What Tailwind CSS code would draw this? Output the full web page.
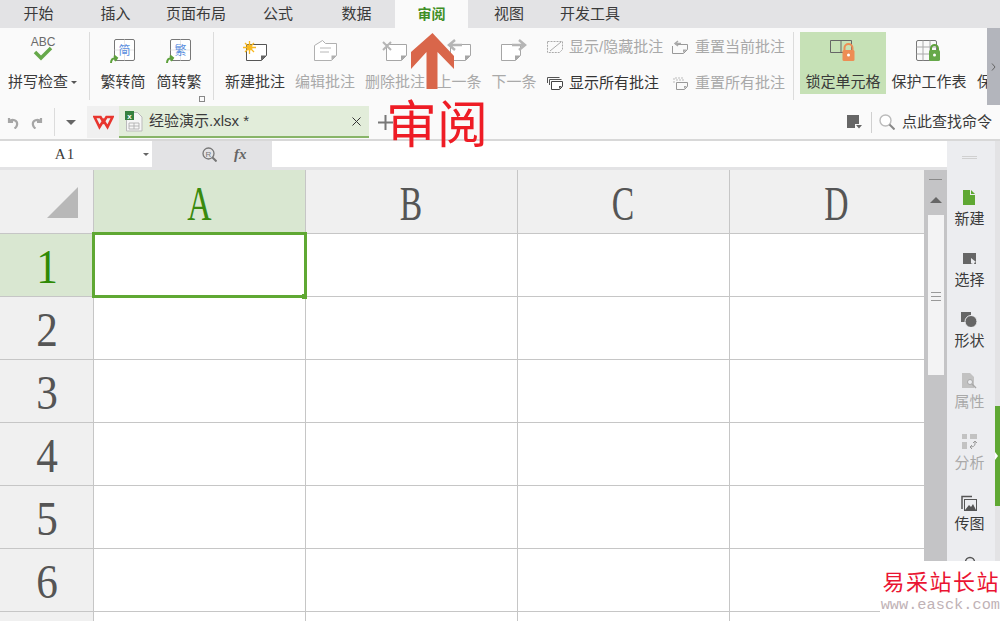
<!DOCTYPE html>
<html lang="zh">
<head>
<meta charset="utf-8">
<script src="https://cdn.jsdelivr.net/npm/@tailwindcss/browser@4"></script>
</head>
<body class="font-['Liberation_Sans','Noto_Sans_CJK_SC',sans-serif] text-[15px] text-[#3a3a3a] bg-white">
<div class="relative w-[1000px] h-[621px] overflow-hidden">

  <!-- tabs -->
  <div class="flex h-[28px] bg-[#e3e3e5] leading-[28px] text-center">
    <div class="w-[77px]">开始</div>
    <div class="w-[77px]">插入</div>
    <div class="w-[84px]">页面布局</div>
    <div class="w-[80px]">公式</div>
    <div class="w-[77px]">数据</div>
    <div class="w-[73px] bg-[#fafafa] text-[#3f8f25] font-bold text-[14px]">审阅</div>
    <div class="w-[82px]">视图</div>
    <div class="w-[80px]">开发工具</div>
  </div>

  <!-- ribbon -->
  <div class="flex h-[77px] bg-[#fafafa] overflow-hidden relative">
    <div class="w-[85px] flex flex-col items-center pt-[8px]">
      <svg class="w-[30px] h-[28px]" viewBox="0 4 30 28"><text x="15" y="14" text-anchor="middle" font-size="12" fill="#6a6a6a" font-family="Liberation Sans">ABC</text><path d="M7 20l6 6 10-10" fill="none" stroke="#66a84a" stroke-width="3.5"/></svg>
      <div class="h-[20px] mt-[8px] leading-[20px] flex items-center whitespace-nowrap">拼写检查<span class="ml-[3px] w-0 h-0 border-x-[3px] border-x-transparent border-t-[3px] border-t-[#555]"></span></div>
    </div>
    <div class="w-[1px] h-[68px] mt-[4px] ml-[4px] bg-[#dcdcdc]"></div>

    <div class="w-[56px] ml-[5px] flex flex-col items-center pt-[8px]">
      <svg class="w-[26px] h-[28px]" viewBox="0 0 26 28"><rect x="4.5" y="3.500" width="20" height="21" rx="1.500" fill="#fff" stroke="#777"/><path d="M4.500 14h20M14.500 3.500v21" stroke="#ccc" stroke-dasharray="1 1"/><text x="14.500" y="19" text-anchor="middle" font-size="12" fill="#5b8fe0" font-family="Noto Sans CJK SC">简</text><path d="M1 27c0-3 2-5 5-5M4 19.500l3 2.500-2 3" fill="none" stroke="#5ea13c" stroke-width="2"/></svg>
      <div class="h-[20px] mt-[8px] leading-[20px] whitespace-nowrap">繁转简</div>
    </div>
    <div class="w-[56px] flex flex-col items-center pt-[8px]">
      <svg class="w-[26px] h-[28px]" viewBox="0 0 26 28"><rect x="4.5" y="3.500" width="20" height="21" rx="1.500" fill="#fff" stroke="#777"/><path d="M4.500 14h20M14.500 3.500v21" stroke="#ccc" stroke-dasharray="1 1"/><text x="14.500" y="19" text-anchor="middle" font-size="12" fill="#5b8fe0" font-family="Noto Sans CJK SC">繁</text><path d="M1 27c0-3 2-5 5-5M4 19.500l3 2.500-2 3" fill="none" stroke="#5ea13c" stroke-width="2"/></svg>
      <div class="h-[20px] mt-[8px] leading-[20px] whitespace-nowrap">简转繁</div>
    </div>
    <div class="w-[1px] h-[68px] mt-[4px] ml-[6px] bg-[#dcdcdc]"></div>
    <div class="absolute left-[199px] top-[68px] w-[6px] h-[6px] border border-[#888]"></div>

    <div class="w-[70px] ml-[6px] flex flex-col items-center pt-[8px]">
      <svg class="w-[26px] h-[28px]" viewBox="0 0 26 28"><path d="M4.500 8.500h20v11l-5 5h-15z" fill="#fff" stroke="#555"/><path d="M19 24.500v-5h5.500z" fill="#666"/><g transform="translate(1 5)"><circle cx="6.500" cy="6.500" r="3" fill="#f8c23a"/><path d="M6.500 0v13M0 6.500h13M2 2l9 9M11 2l-9 9" stroke="#f8b81f" stroke-width="1.300"/></g></svg>
      <div class="h-[20px] mt-[8px] leading-[20px] whitespace-nowrap">新建批注</div>
    </div>
    <div class="w-[70px] flex flex-col items-center pt-[8px] text-[#a9a9a9]">
      <svg class="w-[26px] h-[28px]" viewBox="0 0 26 28"><path d="M2.500 9.500l8-5 3 3h11v12l-5 5h-17z" fill="#fff" stroke="#b0b0b0"/><path d="M19.500 24v-4.500h5z" fill="#b0b0b0"/><path d="M8 12h11M8 16h9" stroke="#b8b8b8"/></svg>
      <div class="h-[20px] mt-[8px] leading-[20px] whitespace-nowrap">编辑批注</div>
    </div>
    <div class="w-[70px] flex flex-col items-center pt-[8px] text-[#a9a9a9]">
      <svg class="w-[26px] h-[28px]" viewBox="0 0 26 28"><path d="M4.500 8.500h20v11l-5 5h-15z" fill="#fff" stroke="#a6a6a6"/><path d="M19 24.500v-5h5.500z" fill="#a6a6a6"/><path d="M1 6l8 8M9 6l-8 8" stroke="#b5b5b5" stroke-width="2"/></svg>
      <div class="h-[20px] mt-[8px] leading-[20px] whitespace-nowrap">删除批注</div>
    </div>
    <div class="w-[58px] flex flex-col items-center pt-[8px] text-[#a9a9a9]">
      <svg class="w-[26px] h-[28px]" viewBox="0 0 26 28"><path d="M4.500 8.500h20v11l-5 5h-15z" fill="#fff" stroke="#a6a6a6"/><path d="M19 24.500v-5h5.500z" fill="#a6a6a6"/><path d="M16 9H5M9 4L3 9l6 5" fill="none" stroke="#b5b5b5" stroke-width="2.500"/></svg>
      <div class="h-[20px] mt-[8px] leading-[20px] whitespace-nowrap">上一条</div>
    </div>
    <div class="w-[52px] flex flex-col items-center pt-[8px] text-[#a9a9a9]">
      <svg class="w-[26px] h-[28px]" viewBox="0 0 26 28"><path d="M.5 8.500h19v11l-5 5H.5z" fill="#fff" stroke="#a6a6a6"/><path d="M14 24.500v-5h5.500z" fill="#a6a6a6"/><path d="M11 9h11M18 4l6 5-6 5" fill="none" stroke="#b5b5b5" stroke-width="2.500"/></svg>
      <div class="h-[20px] mt-[8px] leading-[20px] whitespace-nowrap">下一条</div>
    </div>

    <div class="w-[125px] ml-[7px] flex flex-col pt-[9px] gap-[16px]">
      <div class="flex items-center h-[20px] text-[#a9a9a9] gap-[6px] whitespace-nowrap">
        <svg class="w-[16px] h-[14px] shrink-0" viewBox="0 0 16 14"><path d="M.5 1.500h15v8l-3 3H.5z" fill="none" stroke="#aaa" stroke-dasharray="2 1"/><path d="M3 11L14 2" stroke="#aaa"/></svg>显示/隐藏批注
      </div>
      <div class="flex items-center h-[20px] gap-[6px] text-[#333] whitespace-nowrap">
        <svg class="w-[16px] h-[14px] shrink-0" viewBox="0 0 16 14"><path d="M.5 7V1.500h12M2.500 9V3.500h12" fill="none" stroke="#555"/><path d="M4.500 5.500h11v5l-3 3h-8z" fill="#fff" stroke="#444"/><path d="M12 13v-3h3z" fill="#555"/></svg>显示所有批注
      </div>
    </div>
    <div class="w-[121px] flex flex-col pt-[9px] gap-[16px] text-[#a9a9a9]">
      <div class="flex items-center h-[20px] gap-[7px] whitespace-nowrap">
        <svg class="w-[16px] h-[14px] shrink-0" viewBox="0 0 16 14"><path d="M3.500 4.500h12v5l-4 4h-11V6" fill="none" stroke="#999"/><path d="M11 13V9.500h4z" fill="#aaa"/><path d="M9 3.500H4M6 1L3 3.500 6 6" fill="none" stroke="#aaa" stroke-width="1.500"/></svg>重置当前批注
      </div>
      <div class="flex items-center h-[20px] gap-[7px] whitespace-nowrap">
        <svg class="w-[16px] h-[14px] shrink-0" viewBox="0 0 16 14"><path d="M4.500 6.500h11v4l-3 3h-8z" fill="none" stroke="#999"/><path d="M2 7V2h9M4 4h9" fill="none" stroke="#bbb" stroke-dasharray="2 1"/><path d="M12 13v-3h3z" fill="#aaa"/></svg>重置所有批注
      </div>
    </div>

    <div class="w-[1px] h-[68px] mt-[4px] bg-[#dcdcdc]"></div>
    <div class="w-[86px] h-[62px] mt-[4px] ml-[6px] bg-[#c6e1b6] flex flex-col items-center pt-[4px] shrink-0">
      <svg class="w-[26px] h-[28px]" viewBox="0 0 26 28"><path d="M.5 4.500h21v12H.5zM11 4.500v12" fill="none" stroke="#666"/><path d="M14.500 15v-3a4 4 0 018 0v3" fill="none" stroke="#ee8d54" stroke-width="2"/><rect x="12.500" y="14" width="12" height="11" rx="1.500" fill="#ee8d54"/><circle cx="18.500" cy="19" r="1.500" fill="#fff"/></svg>
      <div class="h-[20px] mt-[8px] leading-[20px] whitespace-nowrap">锁定单元格</div>
    </div>
    <div class="w-[86px] flex flex-col items-center pt-[8px] shrink-0">
      <svg class="w-[26px] h-[28px]" viewBox="0 0 26 28"><rect x=".5" y="4.500" width="20" height="20" rx="1.500" fill="none" stroke="#777"/><path d="M.5 11h20M.5 18h20M7 4.500v20M14 4.500v20" stroke="#aaa"/><path d="M15 15v-2.500a3.500 3.500 0 017 0V15" fill="none" stroke="#5ea13c" stroke-width="2"/><rect x="13" y="14" width="11" height="11" rx="1.500" fill="#66a84a"/><circle cx="18.500" cy="19" r="1.500" fill="#fff"/></svg>
      <div class="h-[20px] mt-[8px] leading-[20px] whitespace-nowrap">保护工作表</div>
    </div>
    <div class="w-[15px] flex flex-col pl-[5px] pt-[44px] overflow-hidden shrink-0 h-[77px]"><span class="leading-[20px]">保</span></div>
    <div class="absolute right-0 top-0 w-[13px] h-[77px] bg-[#b3b5bc] flex items-center justify-center">
      <svg class="w-[6px] h-[8px]" viewBox="0 0 6 8"><path d="M1 .5l3 3.500-3 3.500" fill="none" stroke="#666"/></svg>
    </div>
  </div>

  <!-- document bar -->
  <div class="flex items-center h-[34px] bg-[#fafafa] relative">
    <div class="w-[54px] h-[32px] flex items-center gap-[12px] pl-[6px] shrink-0">
      <svg class="w-[13px] h-[13px]" viewBox="0 0 13 13"><path d="M3 2v4h4M3.500 5.500C6 2.500 12 4 11 9c-.3 1.500-1.500 3-2.500 3.500" fill="none" stroke="#a6a6a6" stroke-width="2.200"/></svg>
      <svg class="w-[13px] h-[13px]" viewBox="0 0 13 13"><path d="M10 2v4H6M9.500 5.500C7 2.500 1 4 2 9c.3 1.500 1.500 3 2.500 3.500" fill="none" stroke="#a6a6a6" stroke-width="2.200"/></svg>
    </div>
    <div class="w-[1px] h-[28px] bg-[#dcdcdc] shrink-0"></div>
    <div class="w-[32px] flex justify-center shrink-0"><span class="w-0 h-0 border-x-[5px] border-x-transparent border-t-[5px] border-t-[#666]"></span></div>
    <div class="w-[32px] h-[32px] bg-[#f0f0f0] flex items-center justify-center shrink-0">
      <svg class="w-[21px] h-[15px]" viewBox="0 0 21 15"><path d="M1.500 2l5 10 4-6.500 4 6.500 5-10h-6l-3 5-3-5z" fill="none" stroke="#e8352e" stroke-width="2.600"/></svg>
    </div>
    <div class="w-[250px] h-[32px] bg-[#e2edda] border-b-2 border-[#88b568] flex items-center shrink-0">
      <svg class="w-[18px] h-[21px] ml-[6px] shrink-0" viewBox="0 0 18 21"><path d="M1.500 1.500h11l4.500 4.500v14H1.500z" fill="#f6f6f6" stroke="#bbb"/><rect x="0" y="0" width="9" height="9" fill="#35803f"/><text x="4.500" y="7.500" text-anchor="middle" font-size="8" fill="#fff" font-family="Liberation Sans" font-weight="bold">x</text><path d="M4 12h10v6H4zM4 15h10M9 12v6" fill="none" stroke="#aaa" stroke-width=".8"/></svg>
      <span class="ml-[6px] leading-[20px]">经验演示.xlsx *</span>
      <svg class="w-[9px] h-[9px] ml-auto mr-[8px]" viewBox="0 0 9 9"><path d="M.5.500l8 8M8.500.500l-8 8" stroke="#333"/></svg>
    </div>
    <svg class="w-[15px] h-[15px] ml-[9px]" viewBox="0 0 15 15"><path d="M0 7.500h15M7.500 0v15" stroke="#777" stroke-width="2"/></svg>
    <div class="ml-auto flex items-center">
      <svg class="w-[15px] h-[14px]" viewBox="0 0 15 14"><path d="M0 0h12v9H8v4H0z" fill="#666"/><path d="M9 10h6l-3 3.500z" fill="#666"/></svg>
      <div class="w-[1px] h-[21px] bg-[#d0d0d0] ml-[9px]"></div>
      <svg class="w-[16px] h-[16px] ml-[7px]" viewBox="0 0 16 16"><circle cx="6.500" cy="6.500" r="5.500" fill="#fff" stroke="#bbb" stroke-width="1.400"/><path d="M10.500 10.500L15.500 15.500" stroke="#888" stroke-width="2"/></svg>
      <span class="ml-[7px] mr-[8px] leading-[20px]">点此查找命令</span>
    </div>
  </div>

  <!-- work area -->
  <div class="flex h-[482px] border-t-2 border-[#d8d8d8] bg-[#e3e3e5]">
    <div class="w-[947px] flex flex-col shrink-0">
      <!-- formula bar -->
      <div class="flex h-[29px] pb-[3px] bg-[#e3e3e5] shrink-0">
        <div class="w-[152px] bg-white relative flex items-center justify-center pr-[22px] pt-[1px] font-['Liberation_Serif',serif] text-[15px] tracking-[1px]">A1
          <span class="absolute right-[3px] top-[12px] w-0 h-0 border-x-[3px] border-x-transparent border-t-[3px] border-t-[#666]"></span>
        </div>
        <div class="w-[120px] flex items-center pl-[50px] gap-[17px]">
          <svg class="w-[15px] h-[15px]" viewBox="0 0 15 15"><circle cx="6.500" cy="6.500" r="5.500" fill="none" stroke="#777" stroke-width="1.300"/><path d="M10.500 10.500L14.500 14.500" stroke="#777" stroke-width="2"/><text x="6.500" y="9.500" text-anchor="middle" font-size="8" fill="#777" font-family="Liberation Sans">R</text></svg>
          <span class="font-['Liberation_Serif',serif] italic text-[15px] font-bold text-[#666]">fx</span>
        </div>
        <div class="flex-1 bg-white"></div>
      </div>
      <!-- sheet + scrollbar -->
      <div class="flex flex-1 min-h-0">
        <div class="w-[924px] shrink-0 overflow-hidden bg-white grid grid-cols-[94px_212px_212px_212px_212px] grid-rows-[64px_63px_63px_63px_63px_63px_63px_63px] font-['Liberation_Serif',serif] text-[48px] leading-none relative">
          <div class="bg-[#f0f0f0] border-r border-b border-[#c6c6c6] relative"><svg class="absolute left-[47px] top-[17px] w-[31px] h-[31px]" viewBox="0 0 31 31"><path d="M31 0v31H0z" fill="#b8b8b8"/></svg></div>
          <div class="bg-[#d9e7d1] border-r border-b border-[#c6c6c6] flex items-center justify-center pt-[4px] text-[#3a8a0e]"><span class="scale-x-70">A</span></div>
          <div class="bg-[#f0f0f0] border-r border-b border-[#c6c6c6] flex items-center justify-center pt-[4px] text-[#555]"><span class="scale-x-70">B</span></div>
          <div class="bg-[#f0f0f0] border-r border-b border-[#c6c6c6] flex items-center justify-center pt-[4px] text-[#555]"><span class="scale-x-70">C</span></div>
          <div class="bg-[#f0f0f0] border-b border-[#c6c6c6] flex items-center justify-center pt-[4px] text-[#555]"><span class="scale-x-70">D</span></div>

          <div class="bg-[#d9e7d1] border-r border-b border-[#c6c6c6] flex items-center justify-center pt-[3px] text-[#2f8a05]"><span class="scale-x-90">1</span></div>
          <div class="border-r border-b border-[#c6c6c6] relative"><div class="absolute -left-[2px] -top-[2px] w-[215px] h-[66px] border-[3px] border-[#5fa833] z-10"></div><div class="absolute -right-[2px] -bottom-[3px] w-[5px] h-[5px] bg-[#5fa833] z-20"></div></div>
          <div class="border-r border-b border-[#c6c6c6]"></div><div class="border-r border-b border-[#c6c6c6]"></div><div class="border-b border-[#c6c6c6]"></div>

          <div class="bg-[#f0f0f0] border-r border-b border-[#c6c6c6] flex items-center justify-center pt-[3px] text-[#555]"><span class="scale-x-90">2</span></div>
          <div class="border-r border-b border-[#c6c6c6]"></div><div class="border-r border-b border-[#c6c6c6]"></div><div class="border-r border-b border-[#c6c6c6]"></div><div class="border-b border-[#c6c6c6]"></div>

          <div class="bg-[#f0f0f0] border-r border-b border-[#c6c6c6] flex items-center justify-center pt-[3px] text-[#555]"><span class="scale-x-90">3</span></div>
          <div class="border-r border-b border-[#c6c6c6]"></div><div class="border-r border-b border-[#c6c6c6]"></div><div class="border-r border-b border-[#c6c6c6]"></div><div class="border-b border-[#c6c6c6]"></div>

          <div class="bg-[#f0f0f0] border-r border-b border-[#c6c6c6] flex items-center justify-center pt-[3px] text-[#555]"><span class="scale-x-90">4</span></div>
          <div class="border-r border-b border-[#c6c6c6]"></div><div class="border-r border-b border-[#c6c6c6]"></div><div class="border-r border-b border-[#c6c6c6]"></div><div class="border-b border-[#c6c6c6]"></div>

          <div class="bg-[#f0f0f0] border-r border-b border-[#c6c6c6] flex items-center justify-center pt-[3px] text-[#555]"><span class="scale-x-90">5</span></div>
          <div class="border-r border-b border-[#c6c6c6]"></div><div class="border-r border-b border-[#c6c6c6]"></div><div class="border-r border-b border-[#c6c6c6]"></div><div class="border-b border-[#c6c6c6]"></div>

          <div class="bg-[#f0f0f0] border-r border-b border-[#c6c6c6] flex items-center justify-center pt-[3px] text-[#555]"><span class="scale-x-90">6</span></div>
          <div class="border-r border-b border-[#c6c6c6]"></div><div class="border-r border-b border-[#c6c6c6]"></div><div class="border-r border-b border-[#c6c6c6]"></div><div class="border-b border-[#c6c6c6]"></div>

          <div class="bg-[#f0f0f0] border-r border-[#c6c6c6]"></div>
          <div class="border-r border-[#c6c6c6]"></div><div class="border-r border-[#c6c6c6]"></div><div class="border-r border-[#c6c6c6]"></div><div></div>
        </div>
        <div class="w-[23px] bg-[#c4c4c6] flex flex-col items-center pt-[9px]">
          <div class="w-[13px] h-[1px] bg-[#8a8a8a]"></div>
          <div class="mt-[17px] w-0 h-0 border-x-[6px] border-x-transparent border-b-[6px] border-b-[#666]"></div>
          <div class="mt-[12px] w-[16px] h-[160px] bg-[#f3f3f4] flex flex-col items-center justify-center gap-[3px] pt-[2px]">
            <div class="w-[10px] h-[1px] bg-[#999]"></div><div class="w-[10px] h-[1px] bg-[#999]"></div><div class="w-[10px] h-[1px] bg-[#999]"></div>
          </div>
        </div>
      </div>
    </div>

    <!-- sidebar -->
    <div class="w-[48px] bg-[#ecedf0] flex flex-col items-center shrink-0 leading-[20px] pr-[3px]">
      <div class="w-[15px] h-[3px] mt-[15px] border-y border-[#d0d0d0]"></div>
      <div class="h-[61px] mt-[31px] flex flex-col items-center shrink-0">
        <svg class="w-[12px] h-[15px]" viewBox="0 0 12 15"><path d="M0 0h7v5h5v10H0zM8 0l4 4H8z" fill="#5fa833"/></svg>
        <span class="mt-[4px]">新建</span>
      </div>
      <div class="h-[61px] flex flex-col items-center shrink-0">
        <svg class="w-[13px] h-[15px]" viewBox="0 0 13 15"><path d="M0 2h13v11H0z" fill="#666"/><path d="M8 7l5 4-2 1 1 3h-2l-1-3-1 1z" fill="#ecedf0"/></svg>
        <span class="mt-[4px]">选择</span>
      </div>
      <div class="h-[61px] flex flex-col items-center shrink-0">
        <svg class="w-[16px] h-[15px]" viewBox="0 0 16 15"><path d="M0 0h10v10H0z" fill="#666"/><circle cx="10" cy="9.500" r="6" fill="#666" stroke="#ecedf0"/></svg>
        <span class="mt-[4px]">形状</span>
      </div>
      <div class="h-[61px] flex flex-col items-center shrink-0 text-[#a9a9a9]">
        <svg class="w-[15px] h-[16px]" viewBox="0 0 15 16"><path d="M0 0h8l4 4v11H0z" fill="#c2c2c2"/><circle cx="8" cy="9" r="2.500" fill="#ecedf0" stroke="#a8a8a8"/><path d="M10 11l4 4" stroke="#a8a8a8" stroke-width="1.500"/></svg>
        <span class="mt-[3px]">属性</span>
      </div>
      <div class="h-[61px] flex flex-col items-center shrink-0 text-[#a9a9a9]">
        <svg class="w-[15px] h-[15px]" viewBox="0 0 15 15"><path d="M0 0h5v5H0zM0 8h5v7H0zM8 0h7v5H8z" fill="#c2c2c2"/><path d="M13 7v3c0 2-2 3-5 3M10 11l-2 2 2 2M11 9l2-2 2 2" fill="none" stroke="#999"/></svg>
        <span class="mt-[4px]">分析</span>
      </div>
      <div class="h-[61px] flex flex-col items-center shrink-0">
        <svg class="w-[16px] h-[16px]" viewBox="0 0 16 16"><path d="M1 14V1.500h10" fill="none" stroke="#555" stroke-width="1.500"/><rect x="3.500" y="4.500" width="12" height="11" fill="#ecedf0" stroke="#555"/><path d="M4 15l4-5 2 2 2-3 3 6z" fill="#555"/></svg>
        <span class="mt-[3px]">传图</span>
      </div>
      <svg class="w-[14px] h-[12px] shrink-0" viewBox="0 0 14 12"><circle cx="7" cy="6" r="4.500" fill="none" stroke="#555" stroke-width="1.500"/></svg>
    </div>
    <div class="w-[5px] bg-[#e3e3e5] pt-[265px] shrink-0">
      <div class="w-[5px] h-[100px] bg-[#5fa833] flex items-center">
        <span class="w-0 h-0 border-y-[4px] border-y-transparent border-l-[3px] border-l-white"></span>
      </div>
    </div>
  </div>

  <!-- annotation arrow + label -->
  <svg class="absolute left-[411px] top-[33px] w-[43px] h-[56px]" viewBox="0 0 43 56"><path d="M21.500 0L43 23v13L26.500 19v37h-11V19L0 36V19z" fill="#d9664a"/></svg>
  <div class="absolute left-[386px] top-[88px] text-[51px] leading-[66px] text-[#ee1c25] font-['Noto_Sans_CJK_SC',sans-serif] whitespace-nowrap">审阅</div>

  <!-- watermark -->
  <div class="absolute left-[880px] top-[561px] w-[120px] h-[60px] bg-white flex flex-col items-end overflow-hidden">
    <div class="text-[22px] leading-[26px] mt-[6px] text-[#ea1432] tracking-[1.500px] whitespace-nowrap font-['Noto_Sans_CJK_SC',sans-serif]">易采站长站</div>
    <div class="text-[15.300px] leading-[18px] mt-[3px] text-[#bfb2b6] font-['Liberation_Mono',monospace] whitespace-nowrap">www.easck.com</div>
  </div>
</div>
</body>
</html>
